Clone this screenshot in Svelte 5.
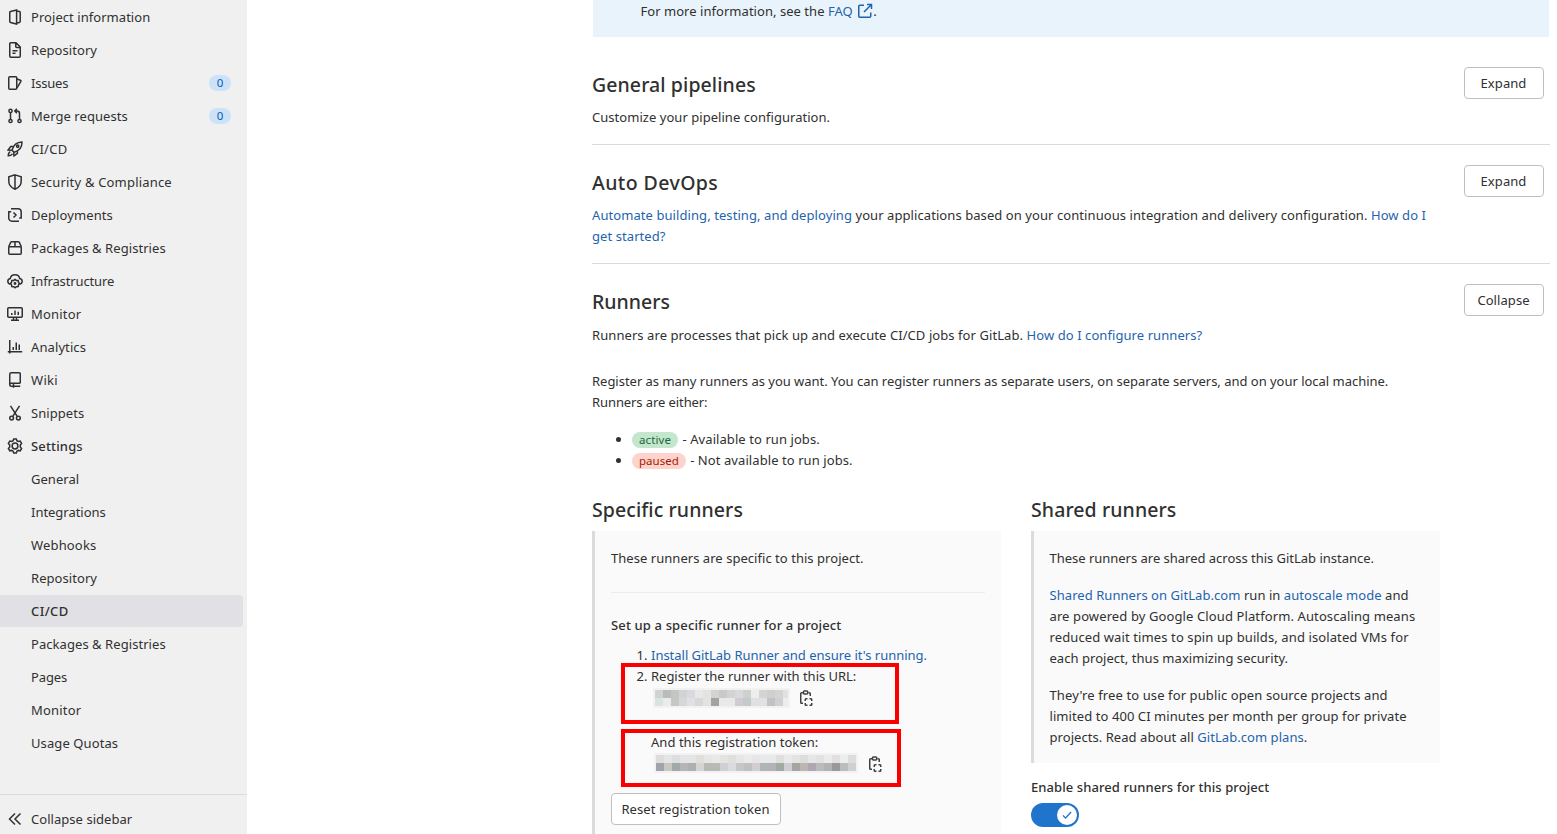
<script>
  const icons = {
    project: '<path d="M9.600.9 3.500 2.500a1 1 0 0 0-.75 1v9a1 1 0 0 0 .75 1l6.100 1.600V.9ZM9.800 2.100l2.600.5a1 1 0 0 1 .8 1v8.800a1 1 0 0 1-.8 1l-2.600.5"/>',
    doc: '<path d="M9 .75H3.75a1 1 0 0 0-1 1v12.5a1 1 0 0 0 1 1h8.5a1 1 0 0 0 1-1V5L9 .75ZM8.75 1v3.5a1 1 0 0 0 1 1H13M5.5 8.75h5M5.5 11.25h3"/>',
    issues: '<rect x="1.75" y="1.75" width="8" height="12.5" rx="1"/><path d="m10 4 3.400 1.300c.5.2.7.7.5 1.200L10 12.900"/>',
    merge: '<circle cx="3.5" cy="2.9" r="1.6"/><circle cx="3.5" cy="13" r="1.6"/><circle cx="12.5" cy="13" r="1.6"/><path d="M3.5 4.5v7M12.5 11.4V5.5a2.5 2.5 0 0 0-2.5-2.5H7.8M9.9.9 7.8 3l2.1 2.1"/>',
    rocket: '<path d="M5 9.2c1-3.6 4-7.8 9.9-8.1.3 5.900-3.7 9-7.600 10.200L5 9.200ZM6.300 5.600H3.700L1.200 9l3.600.3M10.400 9.700v2.600L7 14.900l-.4-3.600M3.300 10.600c-1.500.6-2 2.700-2 4.100 1.400 0 3.400-.5 4-2"/><circle cx="10.700" cy="5.200" r="1.100"/>',
    shield: '<path d="M8 .9 14.200 2.700v4.600c0 3.700-2.400 6.400-6.200 7.900C4.200 13.700 1.800 11 1.800 7.300V2.700L8 .9ZM8 1v14"/>',
    deploy: '<path d="M4 1.750H11a3.200 3.200 0 0 1 3.200 3.200V11H12.200M1.750 4.500V11A3.200 3.200 0 0 0 5 14.250h7M1.200 4.750h3M6.500 5.500 9 8l-2.500 2.500"/>',
    pack: '<path d="M1.750 6.700v6.600a1 1 0 0 0 1 1h10.500a1 1 0 0 0 1-1V6.700M1.400 6.750h13.200M1.750 6.500 3.700 2.400a1 1 0 0 1 .9-.65h6.800a1 1 0 0 1 .9.65l1.950 4.100M8 1.750v5"/>',
    cloud: '<path d="M3.500 11.200C1.800 10.900.8 9.700.8 8.300c0-1.500 1-2.600 2.500-2.900C3.700 3.100 5.600 1.700 8 1.700s4.300 1.400 4.700 3.700c1.500.3 2.500 1.400 2.500 2.900 0 1.400-1 2.600-2.700 2.900"/><path d="m8 6.400 1.300 1 1.900.1.300 1.700.9 1.300-.9 1.400-.3 1.600-1.900.2L8 14.800l-1.300-1.100-1.900-.2-.3-1.600-.9-1.400.9-1.300.3-1.700 1.900-.1L8 6.400Z"/><circle cx="8" cy="10.500" r=".7"/>',
    monitor: '<rect x=".75" y="1.750" width="14.500" height="9.500" rx="1"/><path d="M4 14.250h8M6.500 11.500v2.500M9.500 11.500v2.500M4.750 7v2M8 4.500V9M11.250 5.700V9"/>',
    chart: '<path d="M2.750 1v13.500M.8 12.750h14.400M6.250 8v3M9.250 3.500V11M12.250 5.500V11"/>',
    book: '<path d="M13.250 11.250V1.750a1 1 0 0 0-1-1h-8a1.500 1.500 0 0 0-1.500 1.500v10.500a1.500 1.500 0 0 0 1.500 1.500M13.250 11.250h-9a1.500 1.500 0 0 0 0 3h9M6.500 11.500v4.200"/>',
    scissors: '<path d="m3.500.8 6.700 10.600M12.500.8 5.800 11.400"/><circle cx="4.600" cy="13.100" r="1.900"/><circle cx="11.400" cy="13.100" r="1.900"/>',
    gear: '<path d="M6.700.9h2.600l.6 1.800 1.400.8 1.900-.4 1.400 2.300L13.300 7v1.900l1.300 1.600-1.400 2.300-1.900-.4-1.400.8-.6 1.900H6.700l-.6-1.900-1.400-.8-1.900.4-1.400-2.300L2.700 8.900V7L1.400 5.400l1.400-2.300 1.900.4 1.400-.8.6-1.800Z"/><circle cx="8" cy="8" r="2.900"/>',
    collapse: '<path d="M8 2.500 2.500 8 8 13.500M13.500 2.500 8 8l5.500 5.500"/>',
    copy: '<path d="M5.500 2.750H3.600a.85.85 0 0 0-.85.85v8.800a.85.85 0 0 0 .85.85H5M10.500 2.750h.9a.85.85 0 0 1 .85.85V6"/><rect x="5.500" y=".9" width="4.200" height="3" rx=".8"/><path d="M7.250 11V9.500a.75.75 0 0 1 .75-.75h1.500M11.500 8.750H13a.75.75 0 0 1 .75.75V11M13.750 13v1.500a.75.75 0 0 1-.75.75h-1.500M9.500 15.250H8a.75.75 0 0 1-.75-.75V13"/>'
  };

  const nav = [
    { icon: 'project', label: 'Project information', ls: 0.05 },
    { icon: 'doc', label: 'Repository', ls: 0.06 },
    { icon: 'issues', label: 'Issues', ls: -0.2, count: 0 },
    { icon: 'merge', label: 'Merge requests', ls: 0.05 , count: 0 },
    { icon: 'rocket', label: 'CI/CD', ls: 0.25 },
    { icon: 'shield', label: 'Security & Compliance', ls: 0.19 },
    { icon: 'deploy', label: 'Deployments', ls: 0.1 },
    { icon: 'pack', label: 'Packages & Registries', ls: 0.06 },
    { icon: 'cloud', label: 'Infrastructure', ls: -0.14 },
    { icon: 'monitor', label: 'Monitor', ls: 0.2 },
    { icon: 'chart', label: 'Analytics', ls: 0.1 },
    { icon: 'book', label: 'Wiki', ls: 0.3 },
    { icon: 'scissors', label: 'Snippets', ls: 0.07 },
    { icon: 'gear', label: 'Settings', ls: 0.15, strong: true },
    { label: 'General', ls: 0.03 },
    { label: 'Integrations', ls: -0.03 },
    { label: 'Webhooks', ls: 0.16 },
    { label: 'Repository', ls: 0.06 },
    { label: 'CI/CD', ls: 0.4, active: true, strong: true },
    { label: 'Packages & Registries', ls: 0.06 },
    { label: 'Pages', ls: -0.1 },
    { label: 'Monitor', ls: 0.2 },
    { label: 'Usage Quotas', ls: 0.1 }
  ];

  const urlMask = [
    'd0d3d1 b9bcbd c4c6c4 d2d4d4 d8dadf e8e8e8 e3e3e1 d3d3d1 c9c9c8 d3d3d3 d9d8dd cdd1cd ecefee d4d4d2 cfcfce d4d4d3 e0e2e0',
    'd9e3df e9eceb c5c8c2 d6d7d6 e0e1e5 d8d8d6 e3e3e1 a3a3a3 ebe8ea ebe8ea d0cbd2 c4c9c9 dfe0e4 e2e1e2 c5c0c6 d0d0d0 ebecec'
  ].map((r) => r.split(' '));
  const tokenMask = [
    'dddedc e4e6e6 dddee1 e5e5e6 e3e6e5 dfdfdc e6e6e6 e9e9ea e4e4e1 dfdfdd e6e6e8 ebebeb e6e6e8 e9e9e9 e8eae9 dfdfdf e9e9ea e3e3e1 dddddd e6e6e8 e2e2e2 ebebec e0e0e0 eceeee dddddd',
    'a1a3aa cac6c1 a2a9a9 b5b5b9 aeafb1 d6d5d3 b9bab5 b9bab5 d1cfd5 dadbdb c6c7c7 bfc0c2 d0ced0 b0b6b6 b5b2b7 a1a9a3 d0ccd2 a5a5a1 bcb6b2 b2a6b0 bbbbbc b2b2b2 9a979d bbbdbd d0cfd2'
  ].map((r) => r.split(' '));
</script>

{#snippet icon(name)}
  <svg class="icon" viewBox="0 0 16 16" aria-hidden="true">{@html icons[name]}</svg>
{/snippet}

{#snippet mask(rows)}
  <span class="mask">
    {#each rows as row}
      <span class="mask-row">
        {#each row as c}<i style:background={'#' + c}></i>{/each}
      </span>
    {/each}
  </span>
{/snippet}

<div class="page">
  <aside>
    <nav>
      {#each nav as item}
        <a href="#top" class="item" class:active={item.active} class:strong={item.strong}>
          <span class="slot">{#if item.icon}{@render icon(item.icon)}{/if}</span>
          <span class="label" style:letter-spacing={item.ls + 'px'}>{item.label}</span>
          {#if item.count !== undefined}<span class="count">{item.count}</span>{/if}
        </a>
      {/each}
    </nav>
    <footer>
      <span class="slot">{@render icon('collapse')}</span>
      <span class="tight3">Collapse sidebar</span>
    </footer>
  </aside>

  <main>
    <div class="alert">
      For more information, see the <a href="#faq">FAQ
      <svg class="ext" viewBox="0 0 16 16" aria-hidden="true"><path d="M7 2.250H2.750a1 1 0 0 0-1 1v10a1 1 0 0 0 1 1h10a1 1 0 0 0 1-1V9.500M7 9l7.200-7.200M10 1.500h4.500V6" /></svg></a>.
    </div>

    <section class="general">
      <div class="text">
        <h4>General pipelines</h4>
        <p class="tight3">Customize your pipeline configuration.</p>
      </div>
      <button>Expand</button>
    </section>

    <section class="devops">
      <div class="text">
        <h4 class="wide">Auto DevOps</h4>
        <p><a href="#a">Automate building, testing, and deploying</a> your applications based on your continuous integration and delivery configuration. <a href="#h">How do I<br />get started?</a></p>
      </div>
      <button>Expand</button>
    </section>

    <section class="runners">
      <div class="text">
        <h4 class="snug">Runners</h4>
        <p>Runners are processes that pick up and execute CI/CD jobs for GitLab. <a href="#c">How do I configure runners?</a></p>
      </div>
      <button>Collapse</button>
    </section>

    <div class="body">
      <p class="tight">Register as many runners as you want. You can register runners as separate users, on separate servers, and on your local machine.<br /><span class="tighter">Runners are either:</span></p>
      <ul>
        <li><span class="badge green">active</span> - Available to run jobs.</li>
        <li><span class="badge red">paused</span> - Not available to run jobs.</li>
      </ul>

      <div class="cols">
        <div class="col">
          <h4>Specific runners</h4>
          <div class="well left">
            <p class="tight3">These runners are specific to this project.</p>
            <hr />
            <h5>Set up a specific runner for a project</h5>
            <ol>
              <li><a class="tight" href="#i">Install GitLab Runner and ensure it's running.</a></li>
              <li>
                <span class="tight">Register the runner with this URL:</span>
                <div class="secret url">{@render mask(urlMask)}{@render icon('copy')}</div>
                <div class="tight3">And this registration token:</div>
                <div class="secret token">{@render mask(tokenMask)}{@render icon('copy')}</div>
              </li>
            </ol>
            <button class="reset">Reset registration token</button>
            <div class="frame first"></div>
            <div class="frame second"></div>
          </div>
        </div>

        <div class="col">
          <h4>Shared runners</h4>
          <div class="well right">
            <p class="tight">These runners are shared across this GitLab instance.</p>
            <p><span class="mid"><a href="#s">Shared Runners on GitLab.com</a> run in <a href="#m">autoscale mode</a> and</span><br /><span class="loose">are powered by Google Cloud Platform. Autoscaling means</span><br /><span class="loose">reduced wait times to spin up builds, and isolated VMs for</span><br /><span class="tight3">each project, thus maximizing security.</span></p>
            <p><span class="loose">They're free to use for public open source projects and</span><br />limited to 400 CI minutes per month per group for private<br /><span class="mid">projects. Read about all <a href="#p">GitLab.com plans</a>.</span></p>
          </div>
          <h5 class="toggle-label">Enable shared runners for this project</h5>
          <div class="toggle"><span class="knob"><svg viewBox="0 0 16 16" aria-hidden="true"><path d="m2.500 8.500 3.500 3.500 7.500-8" /></svg></span></div>
        </div>
      </div>
    </div>
  </main>
</div>

<style>
  :global(body) { margin: 0; overflow: hidden; background: #fff; }
  .page {
    display: flex;
    height: 834px;
    overflow: hidden;
    font: 400 13px/21px "Noto Sans", "Open Sans", sans-serif;
    letter-spacing: 0.075px;
    color: #303030;
  }
  a { color: #1f63ae; text-decoration: none; }
  h4, h5, p, ul, ol { margin: 0; padding: 0; }
  h4 { font-size: 19.5px; line-height: 24px; font-weight: 500; letter-spacing: 0.09px; }
  h4.wide { letter-spacing: 0.42px; }
  h4.snug { letter-spacing: 0; }
  h5 { font-size: 13px; line-height: 21px; font-weight: 500; letter-spacing: 0.14px; }
  .tight { letter-spacing: -0.02px; }
  .tighter { letter-spacing: -0.09px; }
  .tight3 { letter-spacing: 0.04px; }
  .mid { letter-spacing: 0.055px; }
  .loose { letter-spacing: 0.11px; }

  .icon, .ext, .knob svg { width: 16px; height: 16px; fill: none; stroke: currentColor; stroke-width: 1.5; flex: none; display: block; }

  aside { width: 247px; flex: none; display: flex; flex-direction: column; justify-content: space-between; background: #f0f0f0; }
  nav { display: flex; flex-direction: column; gap: 1px; padding-top: 1px; }
  .item { display: flex; align-items: center; height: 32px; width: 243px; padding-left: 7px; box-sizing: border-box; color: #303030; border-radius: 0 4px 4px 0; }
  .item.active { background: #e1e0e5; }
  .strong .label { font-weight: 500; }
  .slot { width: 24px; flex: none; }
  .count { margin-left: auto; margin-right: 12px; width: 22px; height: 16px; border-radius: 8px; background: #cbe2f9; color: #0b5cad; font-size: 11.5px; line-height: 16px; text-align: center; }
  footer { display: flex; align-items: center; box-sizing: border-box; height: 40px; padding: 9px 0 0 7px; border-top: 1px solid #dbdbdb; }

  main { width: 958px; margin-left: 345px; flex: none; }
  .alert { height: 37px; margin: 0 1px; padding-left: 47.5px; background: #e9f3fc; line-height: 23px; box-sizing: border-box; white-space: nowrap; letter-spacing: 0.04px; }
  .ext { display: inline-block; vertical-align: -3px; margin-left: 1px; }
  section { display: flex; align-items: flex-start; justify-content: space-between; box-sizing: border-box; }
  section + section { border-top: 1px solid #dbdbdb; }
  section .text { white-space: nowrap; }
  section p { margin-top: 10px; }
  .general { height: 107px; padding-top: 36px; }
  .devops { height: 119px; padding-top: 26px; }
  .runners { padding-top: 26px; }
  .runners p { margin-top: 11px; }
  section button { margin: -6px 6px 0 0; width: 80px; }
  button { height: 32px; border: 1px solid #bfbfbf; border-radius: 4px; background: #fff; color: #303030; font: inherit; letter-spacing: inherit; padding: 0 1px 0 0; box-sizing: border-box; }

  .body { padding-top: 25px; white-space: nowrap; }
  .body ul { margin-top: 16px; padding-left: 40px; }
  .body ul li { height: 21px; }
  .badge { display: inline-block; height: 16px; line-height: 16.5px; padding: 0 7px; border-radius: 8px; font-size: 11.5px; letter-spacing: 0.1px; vertical-align: 0.5px; margin-right: 1px; }
  .red { letter-spacing: 0; }
  .green { background: #c3e6cd; color: #24663b; }
  .red { background: #fdd4cd; color: #ae1800; }

  .cols { display: flex; gap: 30px; margin-top: 26px; }
  .col { width: 409px; }
  .col h4 { padding-top: 1px; line-height: 23px; }
  .well { position: relative; margin-top: 10px; box-sizing: border-box; border-left: 3px solid #dbdbdb; background: #fafafa; padding: 17px 16px 0; }
  .left { height: 320px; }
  .right { height: 232px; padding-left: 15.5px; }
  .right p + p { margin-top: 16px; }
  hr { margin: 23px 0 22px; border: 0; border-top: 1px solid #ededed; }
  .left ol { margin-top: 9px; padding-left: 40px; }
  .secret { display: flex; align-items: center; height: 22px; color: #404040; }
  .url { padding-left: 4px; margin-bottom: 23px; gap: 10px; }
  .token { padding-left: 5px; gap: 11px; }
  .token .mask { margin-bottom: 2px; }
  .mask { display: block; box-shadow: 0 0 0 2px #f2f2f2; }
  .mask-row { display: flex; height: 8px; }
  .mask i { width: 8px; height: 8px; }
  .url .mask i:last-child { width: 5px; }
  .reset { width: 170px; display: block; margin-top: 18px; }
  .frame { position: absolute; box-sizing: border-box; border: 4px solid #fb0000; }
  .first { left: 26px; top: 132px; width: 278px; height: 61px; }
  .second { left: 26px; top: 198px; width: 280px; height: 58px; }

  .toggle-label { margin-top: 14px; letter-spacing: 0.08px; }
  .toggle { display: flex; justify-content: flex-end; align-items: center; margin-top: 5px; width: 48px; height: 24px; padding: 2px; box-sizing: border-box; border-radius: 12px; background: #1f75cb; }
  .knob { display: grid; place-items: center; width: 20px; height: 20px; border-radius: 50%; background: #fff; color: #1f75cb; }
  .knob svg { width: 12px; height: 12px; stroke-width: 1.700; }
</style>
